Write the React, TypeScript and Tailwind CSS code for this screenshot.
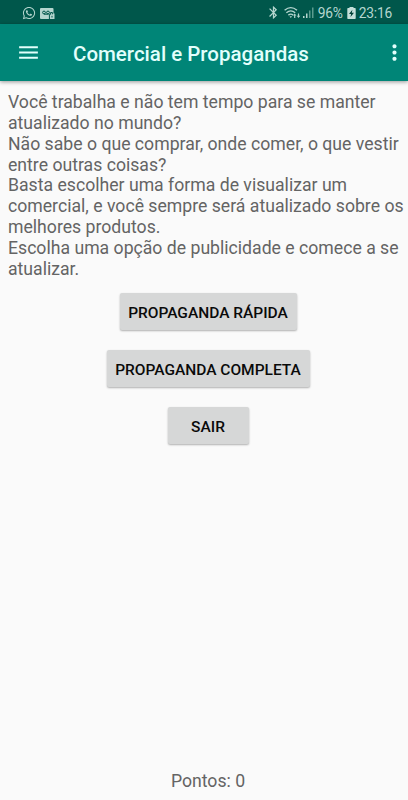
import type { ReactNode } from 'react'
import { FaWhatsapp } from 'react-icons/fa'
import { MdBluetooth, MdMenu, MdMoreVert } from 'react-icons/md'

const paragraphs = [
  ['Você trabalha e não tem tempo para se manter', 'atualizado no mundo?'],
  ['Não sabe o que comprar, onde comer, o que vestir', 'entre outras coisas?'],
  ['Basta escolher uma forma de visualizar um', 'comercial, e você sempre será atualizado sobre os', 'melhores produtos.'],
  ['Escolha uma opção de publicidade e comece a se', 'atualizar.'],
]

function RecorderIcon() {
  return (
    <svg width="16" height="13" viewBox="0 0 16 13">
      <path fill="#b5d6cf" d="M1 1h11.5a1 1 0 0 1 1 1v4.5h1V12H1a1 1 0 0 1-1-1V2a1 1 0 0 1 1-1z" />
      <g fill="none" stroke="#00574b" strokeWidth="1">
        <circle cx="4" cy="5.5" r="1.4" />
        <circle cx="8" cy="5.5" r="1.4" />
        <path d="M4 7.2h4.5M9.4 12V7.3h1.2V5.5h1.8v1.8M12 8.8v1.7" />
      </g>
    </svg>
  )
}

function WifiIcon() {
  return (
    <svg width="17" height="13" viewBox="0 0 17 13">
      <g fill="none" stroke="#b5d6cf" strokeWidth="1.4">
        <path d="M.6 4.2q6.2-5.2 12.4 0" />
        <path d="M2.4 6.7q4.4-3.6 8.8 0" />
        <path d="M4.4 9.1q2.4-1.9 4.8 0" />
      </g>
      <path fill="#b5d6cf" d="M5.5 10.3h2.6L6.8 12zM9 9.4l1.7-2 1.7 2h-1.1V12h-1.2V9.4zM12.8 9.8h1.1V7.4h1.2v2.4h1.2l-1.8 2.1z" />
    </svg>
  )
}

function SignalIcon() {
  return (
    <svg width="12" height="13" viewBox="0 0 12 13">
      <path fill="#b5d6cf" d="M0 10h1.5v2H0zM3 7.5h1.5V12H3z" />
      <path fill="#5b9b8f" d="M6 4.5h1.5V12H6zM9 1.5h1.5V12H9z" />
    </svg>
  )
}

function BatteryIcon() {
  return (
    <svg width="9" height="12" viewBox="0 0 9 12">
      <path fill="#c4dfd9" d="M2.5 0h4v1H8a.7.7 0 0 1 .7.7v9.6a.7.7 0 0 1-.7.7H1a.7.7 0 0 1-.7-.7V1.7A.7.7 0 0 1 1 1h1.5z" />
      <path fill="#003f36" d="M5.4 2.8 2 7.1h2.1L3.5 10 7 5.8H4.8z" />
    </svg>
  )
}

function ActionButton({ children, className = '' }: { children: ReactNode; className?: string }) {
  return (
    <button className={`flex h-[37px] items-center justify-center rounded-xs bg-[#d6d7d7] pt-[4px] text-[15.5px] leading-none font-medium whitespace-nowrap text-[#0a0a0a] shadow-[0_1px_2px_rgba(0,0,0,0.3)] ${className}`}>
      {children}
    </button>
  )
}

export default function App() {
  return (
    <div className="flex h-screen w-full flex-col overflow-hidden bg-[#fafafa] font-[Roboto,sans-serif]">
      <div className="flex h-6 shrink-0 items-center bg-[#00574b] pt-0.5 pr-4 pl-[22px] text-[#b5d6cf]">
        <FaWhatsapp size={14} />
        <div className="ml-1">
          <RecorderIcon />
        </div>
        <div className="ml-auto flex items-center">
          <MdBluetooth size={15} />
          <div className="ml-[3px]"><WifiIcon /></div>
          <div className="ml-0.5"><SignalIcon /></div>
          <span className="ml-[3px] w-[29px] pt-0.5 text-[13.8px] leading-none tracking-[-0.2px] whitespace-nowrap">96%</span>
          <BatteryIcon />
          <span className="ml-[3px] pt-0.5 text-[13.8px] leading-none tracking-[-0.2px]">23:16</span>
        </div>
      </div>

      <header className="z-10 flex h-[57px] shrink-0 items-center bg-[#008577] pr-px pl-4 text-[#e2fffc] shadow-[0_1px_4px_rgba(0,0,0,0.4)]">
        <MdMenu size={25} />
        <h1 className="ml-8 pt-[3px] text-[20.5px] leading-none font-medium whitespace-nowrap">Comercial e Propagandas</h1>
        <MdMoreVert size={25} className="ml-auto shrink-0" />
      </header>

      <main className="flex flex-1 flex-col items-center pl-2 text-[#646464]">
        <div className="w-full pt-[11px] text-[17.65px] leading-[20.85px] whitespace-nowrap">
          {paragraphs.map(lines => (
            <div key={lines[0]}>
              {lines.map(line => <p key={line}>{line}</p>)}
            </div>
          ))}
        </div>

        <div className="mt-[13.4px] flex flex-col items-center gap-5">
          <ActionButton className="w-[177px]">PROPAGANDA RÁPIDA</ActionButton>
          <ActionButton className="w-[203px]">PROPAGANDA COMPLETA</ActionButton>
          <ActionButton className="w-[81px]">SAIR</ActionButton>
        </div>

        <p className="mt-auto mb-2 text-[17.65px] leading-[21px]">Pontos: 0</p>
      </main>
    </div>
  )
}
